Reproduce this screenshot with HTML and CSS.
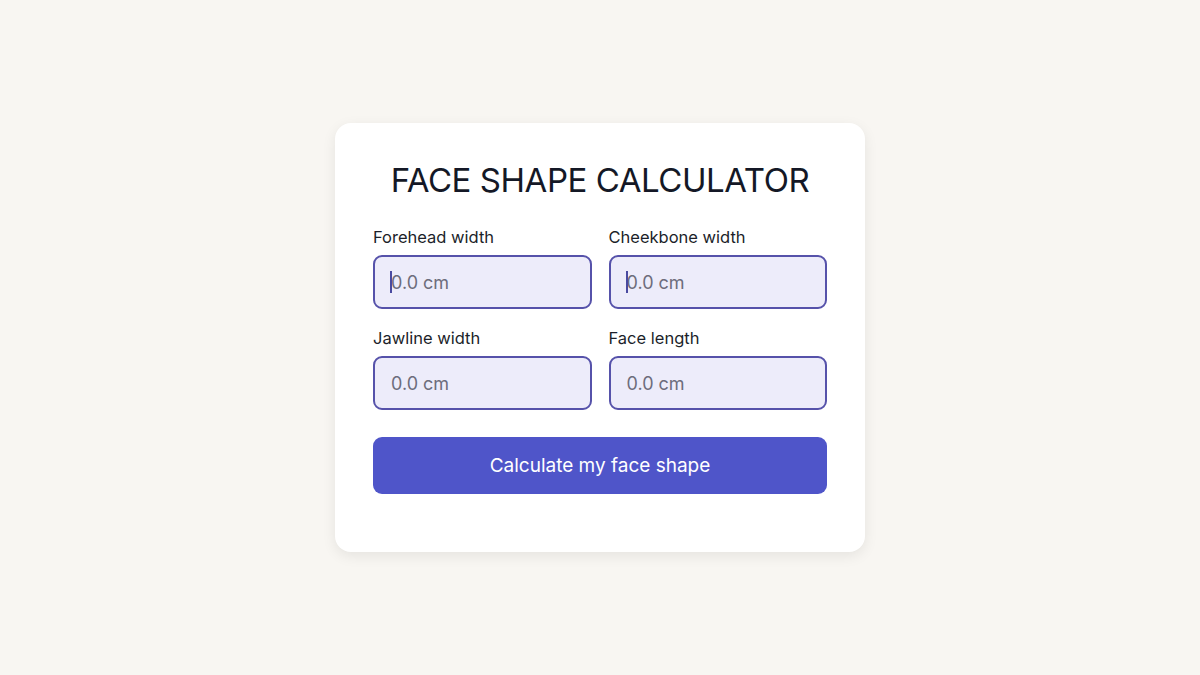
FILE: index.html
```html
<!DOCTYPE html>
<html lang="en">
<head>
    <meta charset="UTF-8">
    <meta name="viewport" content="width=device-width, initial-scale=1.0">
    <title>Face Shape Calculator</title>
    <link rel="stylesheet" href="styles.css">
</head>
<body>
    <div class="card">
        <h1 class="title">FACE SHAPE CALCULATOR</h1>
        <div class="fields">
            <label class="field">
                <span class="label">Forehead width</span>
                <span class="input-wrap">
                    <input class="input" type="text" placeholder="0.0 cm">
                    <span class="caret"></span>
                </span>
            </label>
            <label class="field">
                <span class="label">Cheekbone width</span>
                <span class="input-wrap">
                    <input class="input" type="text" placeholder="0.0 cm">
                    <span class="caret"></span>
                </span>
            </label>
            <label class="field">
                <span class="label">Jawline width</span>
                <span class="input-wrap">
                    <input class="input" type="text" placeholder="0.0 cm">
                </span>
            </label>
            <label class="field">
                <span class="label">Face length</span>
                <span class="input-wrap">
                    <input class="input" type="text" placeholder="0.0 cm">
                </span>
            </label>
        </div>
        <button class="button">Calculate my face shape</button>
    </div>
</body>
</html>
```

FILE: styles.css
```css
body {
    font-family: 'Inter', 'Noto Sans', sans-serif;
    background: #f8f6f2;
    margin: 0;
    min-height: 100vh;
    display: flex;
    justify-content: center;
    align-items: flex-start;
}

.card {
    margin-top: 123px;
    width: 530px;
    box-sizing: border-box;
    padding: 35px 38px 58px 38px;
    background: #fff;
    border-radius: 16px;
    box-shadow: 0 4px 14px rgba(0,0,0,0.08);
}

.title {
    margin: 0 0 24px 0;
    font-size: 33px;
    font-weight: 400;
    line-height: 45px;
    letter-spacing: -0.45px;
    white-space: nowrap;
    text-align: center;
    color: #141826;
}

.fields {
    display: grid;
    grid-template-columns: 1fr 1fr;
    column-gap: 17px;
    row-gap: 19px;
}

.field {
    display: flex;
    flex-direction: column;
    gap: 8px;
}

.label {
    font-size: 16.5px;
    line-height: 20px;
    color: #1c1f2a;
}

.input-wrap {
    position: relative;
    display: block;
}

.input {
    width: 100%;
    height: 54px;
    box-sizing: border-box;
    padding: 0 16px;
    font-family: inherit;
    font-size: 18px;
    background: #edecfa;
    border: 2px solid #5652aa;
    border-radius: 9px;
    outline: none;
    color: #1c1f2a;
}

.input::placeholder {
    color: #6d6d7c;
}

.caret {
    position: absolute;
    left: 17px;
    top: 16px;
    width: 2px;
    height: 22px;
    background: #4a4aa0;
}

.button {
    display: block;
    width: 100%;
    height: 57px;
    margin-top: 27px;
    border: none;
    border-radius: 9px;
    background: #4f55c9;
    color: #fff;
    font-family: inherit;
    font-size: 19px;
    cursor: pointer;
}
```
